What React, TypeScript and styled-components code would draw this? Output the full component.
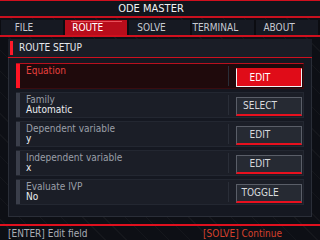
import React from "react";
import styled, { createGlobalStyle, css } from "styled-components";

const FONT = `"DejaVu Sans Condensed", "DejaVu Sans", sans-serif`;

const Global = createGlobalStyle`
  html, body { margin: 0; padding: 0; }
  body {
    width: 320px;
    height: 240px;
    overflow: hidden;
    background: #0d0f15;
    font-family: ${FONT};
    font-stretch: condensed;
  }
  * { box-sizing: border-box; }
`;

const Screen = styled.div`
  width: 320px;
  height: 240px;
  display: flex;
  flex-direction: column;
  background-color: #0d0f15;
  background-image: repeating-linear-gradient(
    45deg,
    transparent 0 14px,
    rgba(255, 255, 255, 0.03) 14px 15px
  );
`;

const TitleBar = styled.header`
  height: 18px;
  display: flex;
  align-items: center;
  justify-content: center;
  padding-right: 18px;
  background: #12141b;
  border-top: 1px solid #d0101e;
  border-bottom: 2px solid #c8101e;
`;

const Title = styled.h1`
  margin: 0;
  font-size: 11px;
  font-weight: normal;
  line-height: 14px;
  color: #f0f0f2;
`;

const TabBar = styled.nav`
  margin-top: 2px;
  height: 17px;
  display: flex;
  gap: 2px;
  padding: 0 2px 0 1px;
  background: #0b0c11;
  border-bottom: 2px solid #d0101e;
`;

const Tab = styled.div<{ $active?: boolean }>`
  position: relative;
  flex: 1;
  display: flex;
  align-items: center;
  justify-content: center;
  padding-right: 16px;
  font-size: 10px;
  line-height: 12px;
  color: #c6cad2;
  background: #161922;
  ${(p) =>
    p.$active &&
    css`
      background: #b80d1b;
      color: #ffffff;
      &::before {
        content: "";
        position: absolute;
        left: 6px;
        right: 5px;
        top: 1px;
        height: 1px;
        background: #e8505a;
      }
    `}
`;

const Main = styled.main`
  margin-top: 2px;
  padding: 0 8px;
  display: flex;
`;

const Panel = styled.section`
  width: 304px;
  display: flex;
  flex-direction: column;
`;

const SectionHeader = styled.div`
  height: 19px;
  display: flex;
  align-items: center;
  gap: 6px;
  padding-left: 2px;
  background: #1a1d26;
  border-bottom: 1px solid #d0101e;
`;

const Marker = styled.span`
  width: 3px;
  height: 14px;
  background: #ff1a2a;
`;

const SectionTitle = styled.h2`
  margin: 0;
  font-size: 10px;
  font-weight: normal;
  line-height: 12px;
  color: #e6e8ec;
`;

const FieldList = styled.div`
  display: flex;
  flex-direction: column;
  gap: 3px;
  padding: 5px 7px 11px;
  background: #151821;
  border: 1px solid #2a2e38;
  border-top: none;
`;

const FieldRow = styled.div<{ $selected?: boolean }>`
  height: 26px;
  display: flex;
  background: #1b1e27;
  border: 1px solid #232731;
  border-left: none;
  ${(p) =>
    p.$selected &&
    css`
      background: #1f0a0c;
      border-color: #3a0c10;
      border-top-color: #b8101e;
    `}
`;

const Accent = styled.span<{ $selected?: boolean }>`
  width: 4px;
  flex: none;
  background: ${(p) => (p.$selected ? "#ff1424" : "#3a3e4a")};
`;

const FieldText = styled.div`
  flex: 1;
  display: flex;
  flex-direction: column;
  padding: 2px 6px 0;
`;

const FieldLabel = styled.span<{ $selected?: boolean }>`
  font-size: 10px;
  line-height: 10px;
  color: ${(p) => (p.$selected ? "#e8403e" : "#9a9ea8")};
`;

const FieldValue = styled.span`
  font-size: 10px;
  line-height: 10px;
  color: #eceef2;
`;

const Divider = styled.span`
  align-self: flex-end;
  width: 1px;
  height: 20px;
  margin: 0 7px 2px 0;
  background: #2a2e38;
`;

const ActionButton = styled.button<{ $primary?: boolean }>`
  align-self: flex-end;
  width: 66px;
  height: 19px;
  margin: 0 1px 1px 0;
  padding: 0 18px 0 0;
  display: flex;
  align-items: center;
  justify-content: center;
  font-family: ${FONT};
  font-stretch: condensed;
  font-size: 10px;
  line-height: 12px;
  color: #d8dade;
  background: #262a33;
  border: 1px solid #5a5e68;
  border-bottom: 2px solid #e8101e;
  ${(p) =>
    p.$primary &&
    css`
      color: #ffffff;
      background: #e00c18;
      border: 1px solid #f2f2f4;
      border-top-color: #e00c18;
    `}
`;

const Footer = styled.footer`
  margin-top: auto;
  height: 16px;
  display: flex;
  align-items: center;
  justify-content: space-between;
  padding: 1px 38px 0 8px;
  border-top: 2px solid #e0101e;
  font-size: 10px;
  line-height: 12px;
`;

const Hint = styled.span<{ $accent?: boolean }>`
  color: ${(p) => (p.$accent ? "#d6402c" : "#a9adb5")};
`;

const tabs = ["FILE", "ROUTE", "SOLVE", "TERMINAL", "ABOUT"];

const fields = [
  { label: "Equation", value: "", action: "EDIT", selected: true },
  { label: "Family", value: "Automatic", action: "SELECT" },
  { label: "Dependent variable", value: "y", action: "EDIT" },
  { label: "Independent variable", value: "x", action: "EDIT" },
  { label: "Evaluate IVP", value: "No", action: "TOGGLE" },
];

export default function App() {
  return (
    <>
      <Global />
      <Screen>
        <TitleBar>
          <Title>ODE MASTER</Title>
        </TitleBar>
        <TabBar>
          {tabs.map((t) => (
            <Tab key={t} $active={t === "ROUTE"}>
              {t}
            </Tab>
          ))}
        </TabBar>
        <Main>
          <Panel>
            <SectionHeader>
              <Marker />
              <SectionTitle>ROUTE SETUP</SectionTitle>
            </SectionHeader>
            <FieldList>
              {fields.map((f) => (
                <FieldRow key={f.label} $selected={f.selected}>
                  <Accent $selected={f.selected} />
                  <FieldText>
                    <FieldLabel $selected={f.selected}>{f.label}</FieldLabel>
                    <FieldValue>{f.value}</FieldValue>
                  </FieldText>
                  <Divider />
                  <ActionButton $primary={f.selected}>{f.action}</ActionButton>
                </FieldRow>
              ))}
            </FieldList>
          </Panel>
        </Main>
        <Footer>
          <Hint>[ENTER] Edit field</Hint>
          <Hint $accent>[SOLVE] Continue</Hint>
        </Footer>
      </Screen>
    </>
  );
}
